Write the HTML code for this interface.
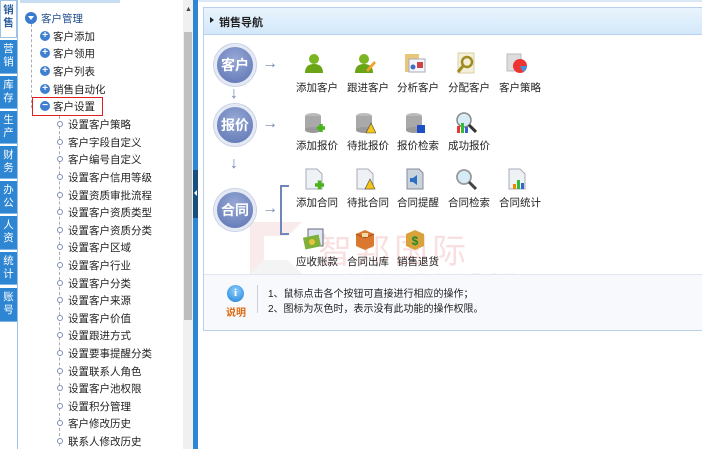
<!DOCTYPE html>
<html><head><meta charset="utf-8"><style>
*{margin:0;padding:0;box-sizing:border-box}
body{width:702px;height:449px;overflow:hidden;background:#fff;font-family:"Liberation Sans","Noto Sans CJK SC",sans-serif;font-size:11px;color:#222;position:relative}
.abs{position:absolute}
.tab{position:absolute;left:0;width:17px;background:#2e86d3;color:#fff;font-size:10.5px;line-height:13px;text-align:center;padding-top:3px;border-bottom:1px solid #7fb6e6}
.ti{position:absolute;white-space:nowrap;font-size:10.5px}
.sub{position:absolute;left:68px;white-space:nowrap;font-size:10.5px;color:#222}
.subdot{position:absolute;left:57px;width:6px;height:6px;border:1.5px solid #7d8eb5;border-radius:50%;background:#fff}
.plus{position:absolute;left:40px;width:10px;height:10px;border-radius:50%;background:#3f7fd0;color:#fff;font-size:10px;line-height:10px;text-align:center;font-weight:bold}
.circ{position:absolute;width:42px;height:42px;border-radius:50%;background:radial-gradient(circle at 50% 35%,#97a9d6,#5b72b2);border:3px solid #e4e9f4;box-shadow:0 0 0 1px #c8d0e6;color:#fff;font-size:14px;font-weight:bold;text-align:center;line-height:36px}
.lbl{position:absolute;font-size:10.5px;white-space:nowrap}
.ic{position:absolute;width:22px;height:22px}
.arr{position:absolute;color:#6f86b8;font-size:16px}
</style></head><body>
<div class="abs" style="left:0;top:0;width:18px;height:449px;background:#fff;border-right:1px solid #9cc2e6"></div>
<div class="tab" style="top:0;height:38px;background:#fff;color:#2a5f9e;border:1px solid #9cc2e6;font-weight:bold">销<br>售</div>
<div class="tab" style="top:40px;height:34px">营<br>销</div>
<div class="tab" style="top:76px;height:33px">库<br>存</div>
<div class="tab" style="top:111px;height:33px">生<br>产</div>
<div class="tab" style="top:146px;height:33px">财<br>务</div>
<div class="tab" style="top:181px;height:33px">办<br>公</div>
<div class="tab" style="top:216px;height:34px">人<br>资</div>
<div class="tab" style="top:252px;height:33px">统<br>计</div>
<div class="tab" style="top:288px;height:34px">账<br>号</div>
<div class="abs" style="left:20px;top:0;width:100px;height:3px;background:#c8ddf2"></div>
<div class="abs" style="left:183px;top:0;width:10px;height:449px;background:#f0f0f0"></div>
<div class="abs" style="left:184px;top:32px;width:8px;height:128px;background:#c0c0c0"></div>
<div class="abs" style="left:184px;top:160px;width:8px;height:160px;background:#bdbdbd"></div>
<div class="abs" style="left:185px;top:6px;font-size:7px;color:#444">▲</div>
<div class="abs" style="left:193px;top:0;width:5px;height:449px;background:#2e86d3"></div>
<div class="abs" style="left:193px;top:170px;width:5px;height:48px;background:#17507e"></div>
<div class="abs" style="left:194px;top:190px;width:0;height:0;border:3px solid transparent;border-right:3px solid #fff;border-left:0"></div>
<div class="abs" style="left:31px;top:24px;height:84px;border-left:1px dashed #aab"></div>
<div class="abs" style="left:59px;top:116px;height:330px;border-left:1px dashed #aab"></div>
<div class="abs" style="left:25px;top:12px;width:12px;height:12px;border-radius:50%;background:#3a7bd0"></div>
<div class="abs" style="left:28px;top:16px;width:0;height:0;border:3px solid transparent;border-top:4px solid #fff;border-bottom:0"></div>
<div class="ti" style="left:41px;top:11px;color:#1e4e8c">客户管理</div>
<div class="plus" style="top:31px">+</div><div class="ti" style="left:53px;top:29px">客户添加</div>
<div class="plus" style="top:48px">+</div><div class="ti" style="left:53px;top:46px">客户领用</div>
<div class="plus" style="top:66px">+</div><div class="ti" style="left:53px;top:64px">客户列表</div>
<div class="plus" style="top:84px">+</div><div class="ti" style="left:53px;top:82px">销售自动化</div>
<div class="plus" style="top:101px">−</div><div class="ti" style="left:53px;top:99px">客户设置</div>
<div class="abs" style="left:32px;top:97px;width:71px;height:19px;border:1.5px solid #e02020"></div>
<div class="subdot" style="top:121px"></div><div class="sub" style="top:117px">设置客户策略</div>
<div class="subdot" style="top:139px"></div><div class="sub" style="top:135px">客户字段自定义</div>
<div class="subdot" style="top:156px"></div><div class="sub" style="top:152px">客户编号自定义</div>
<div class="subdot" style="top:174px"></div><div class="sub" style="top:170px">设置客户信用等级</div>
<div class="subdot" style="top:192px"></div><div class="sub" style="top:188px">设置资质审批流程</div>
<div class="subdot" style="top:209px"></div><div class="sub" style="top:205px">设置客户资质类型</div>
<div class="subdot" style="top:227px"></div><div class="sub" style="top:223px">设置客户资质分类</div>
<div class="subdot" style="top:244px"></div><div class="sub" style="top:240px">设置客户区域</div>
<div class="subdot" style="top:262px"></div><div class="sub" style="top:258px">设置客户行业</div>
<div class="subdot" style="top:280px"></div><div class="sub" style="top:276px">设置客户分类</div>
<div class="subdot" style="top:297px"></div><div class="sub" style="top:293px">设置客户来源</div>
<div class="subdot" style="top:315px"></div><div class="sub" style="top:311px">设置客户价值</div>
<div class="subdot" style="top:332px"></div><div class="sub" style="top:328px">设置跟进方式</div>
<div class="subdot" style="top:350px"></div><div class="sub" style="top:346px">设置要事提醒分类</div>
<div class="subdot" style="top:368px"></div><div class="sub" style="top:364px">设置联系人角色</div>
<div class="subdot" style="top:385px"></div><div class="sub" style="top:381px">设置客户池权限</div>
<div class="subdot" style="top:403px"></div><div class="sub" style="top:399px">设置积分管理</div>
<div class="subdot" style="top:420px"></div><div class="sub" style="top:416px">客户修改历史</div>
<div class="subdot" style="top:438px"></div><div class="sub" style="top:434px">联系人修改历史</div>
<div class="abs" style="left:198px;top:0;width:504px;height:2px;background:#dbe8f5"></div>
<div class="abs" style="left:203px;top:7px;width:500px;height:324px;border:1px solid #b9d1ec;background:#fff"></div>
<div class="abs" style="left:204px;top:8px;width:498px;height:27px;background:linear-gradient(#e9f4fd,#d3e8fa);border-bottom:1px solid #b9d1ec"></div>
<div class="abs" style="left:210px;top:17px;width:0;height:0;border:3px solid transparent;border-left:4px solid #222;border-right:0"></div>
<div class="abs" style="left:219px;top:14px;font-size:11px;font-weight:bold">销售导航</div>
<div class="abs" style="left:250px;top:222px;width:52px;height:52px;border:14px solid rgba(225,150,150,.18);border-right-color:transparent;border-bottom-color:rgba(200,200,200,.18)"></div>
<div class="abs" style="left:318px;top:224px;font-size:34px;color:rgba(230,130,130,.25);letter-spacing:4px">智邦国际</div>
<div class="abs" style="left:345px;top:270px;font-size:10px;color:rgba(180,180,180,.35);letter-spacing:8px">企业管理软件领导品牌</div>
<div class="circ" style="left:214px;top:44px">客户</div>
<div class="circ" style="left:214px;top:104px">报价</div>
<div class="circ" style="left:214px;top:189px">合同</div>
<div class="arr" style="left:230px;top:85px">↓</div>
<div class="arr" style="left:230px;top:155px">↓</div>
<div class="arr" style="left:262px;top:55px">→</div>
<div class="arr" style="left:262px;top:115px">→</div>
<div class="arr" style="left:262px;top:200px">→</div>
<div class="abs" style="left:280px;top:185px;width:9px;height:50px;border:2px solid #6f86b8;border-right:0"></div>
<svg class="ic" style="left:303px;top:52px" viewBox="0 0 22 22"><circle cx="11" cy="7" r="5" fill="#7bb51f"/><path d="M2 21q0-9 9-9t9 9z" fill="#6aa516"/></svg>
<svg class="ic" style="left:354px;top:52px" viewBox="0 0 22 22"><circle cx="10" cy="7" r="5" fill="#7bb51f"/><path d="M1 21q0-9 9-9t9 9z" fill="#6aa516"/><path d="M12 18l8-9 2 2-8 9z" fill="#f2a12b"/></svg>
<svg class="ic" style="left:404px;top:52px" viewBox="0 0 22 22"><rect x="1" y="2" width="14" height="18" fill="#e8c77a"/><rect x="5" y="7" width="16" height="13" fill="#f4f6fb" stroke="#aab"/><circle cx="9" cy="15" r="2.5" fill="#3d6cc4"/><rect x="13" y="10" width="6" height="6" fill="#c44"/></svg>
<svg class="ic" style="left:455px;top:52px" viewBox="0 0 22 22"><rect x="3" y="1" width="16" height="20" fill="#f3efd9" stroke="#d8cfa7"/><circle cx="12" cy="10" r="5" fill="none" stroke="#a08b1f" stroke-width="2.5"/><path d="M8 14l-5 6" stroke="#a08b1f" stroke-width="3"/></svg>
<svg class="ic" style="left:506px;top:52px" viewBox="0 0 22 22"><rect x="1" y="2" width="14" height="17" fill="#ddd" stroke="#bbb"/><circle cx="14" cy="14" r="7" fill="#e33"/><path d="M14 14l7 0a7 7 0 0 1-4 6z" fill="#4a90d9"/></svg>
<div class="lbl" style="left:296px;top:80px">添加客户</div>
<div class="lbl" style="left:347px;top:80px">跟进客户</div>
<div class="lbl" style="left:397px;top:80px">分析客户</div>
<div class="lbl" style="left:448px;top:80px">分配客户</div>
<div class="lbl" style="left:499px;top:80px">客户策略</div>
<svg class="ic" style="left:303px;top:112px" viewBox="0 0 22 22"><ellipse cx="10" cy="4" rx="8" ry="3" fill="#bbb"/><rect x="2" y="4" width="16" height="14" fill="#a9a9a9"/><ellipse cx="10" cy="18" rx="8" ry="3" fill="#999"/><path d="M14 16h8M18 12v8" stroke="#4bb31b" stroke-width="3.5"/></svg>
<svg class="ic" style="left:354px;top:112px" viewBox="0 0 22 22"><ellipse cx="10" cy="4" rx="8" ry="3" fill="#bbb"/><rect x="2" y="4" width="16" height="14" fill="#a9a9a9"/><ellipse cx="10" cy="18" rx="8" ry="3" fill="#999"/><path d="M17 11l5 10h-10z" fill="#f5c518" stroke="#444" stroke-width=".6"/></svg>
<svg class="ic" style="left:404px;top:112px" viewBox="0 0 22 22"><ellipse cx="10" cy="4" rx="8" ry="3" fill="#bbb"/><rect x="2" y="4" width="16" height="14" fill="#a9a9a9"/><ellipse cx="10" cy="18" rx="8" ry="3" fill="#999"/><rect x="13" y="13" width="8" height="8" fill="#1f4fc4"/></svg>
<svg class="ic" style="left:455px;top:112px" viewBox="0 0 22 22"><circle cx="9" cy="8" r="7" fill="#d8ecf7" stroke="#888" stroke-width="1.5"/><path d="M14 13l7 7" stroke="#333" stroke-width="3"/><rect x="2" y="14" width="3" height="7" fill="#e33"/><rect x="6" y="11" width="3" height="10" fill="#3b3"/><rect x="10" y="15" width="3" height="6" fill="#36c"/></svg>
<div class="lbl" style="left:296px;top:138px">添加报价</div>
<div class="lbl" style="left:347px;top:138px">待批报价</div>
<div class="lbl" style="left:397px;top:138px">报价检索</div>
<div class="lbl" style="left:448px;top:138px">成功报价</div>
<svg class="ic" style="left:303px;top:168px" viewBox="0 0 22 22"><path d="M3 1h11l5 5v15H3z" fill="#eef2f5" stroke="#aab"/><path d="M12 17h9M16.5 12.5v9" stroke="#4bb31b" stroke-width="3.5"/></svg>
<svg class="ic" style="left:354px;top:168px" viewBox="0 0 22 22"><path d="M3 1h11l5 5v15H3z" fill="#eef2f5" stroke="#aab"/><path d="M16 11l5 10h-10z" fill="#f5c518" stroke="#444" stroke-width=".6"/></svg>
<svg class="ic" style="left:404px;top:168px" viewBox="0 0 22 22"><path d="M3 1h12l4 4v16H3z" fill="#c9d3dc" stroke="#889"/><path d="M6 10h3l4-3v10l-4-3H6z" fill="#2d6fc1"/></svg>
<svg class="ic" style="left:455px;top:168px" viewBox="0 0 22 22"><circle cx="9" cy="9" r="7" fill="#d5ebf8" stroke="#999" stroke-width="1.8"/><path d="M14 14l7 7" stroke="#444" stroke-width="3"/></svg>
<svg class="ic" style="left:506px;top:168px" viewBox="0 0 22 22"><path d="M3 1h11l5 5v15H3z" fill="#eef2f5" stroke="#aab"/><rect x="11" y="12" width="3" height="9" fill="#3b3"/><rect x="15" y="15" width="3" height="6" fill="#36c"/><rect x="7" y="16" width="3" height="5" fill="#e80"/></svg>
<div class="lbl" style="left:296px;top:195px">添加合同</div>
<div class="lbl" style="left:347px;top:195px">待批合同</div>
<div class="lbl" style="left:397px;top:195px">合同提醒</div>
<div class="lbl" style="left:448px;top:195px">合同检索</div>
<div class="lbl" style="left:499px;top:195px">合同统计</div>
<svg class="ic" style="left:303px;top:228px" viewBox="0 0 22 22"><rect x="5" y="1" width="15" height="17" fill="#dfe6f3" stroke="#667"/><rect x="1" y="8" width="16" height="12" fill="#7fb13a" transform="rotate(-12 9 14)"/><circle cx="9" cy="14" r="3" fill="#e8c33a"/></svg>
<svg class="ic" style="left:354px;top:228px" viewBox="0 0 22 22"><path d="M2 6l9-4 9 4v12l-9 4-9-4z" fill="#d9782e"/><path d="M2 6l9 4 9-4" fill="none" stroke="#a9521a"/><rect x="8" y="5" width="6" height="4" fill="#f3d9a5"/></svg>
<svg class="ic" style="left:404px;top:228px" viewBox="0 0 22 22"><path d="M2 6l9-4 9 4v12l-9 4-9-4z" fill="#d9a23b"/><text x="11" y="17" font-size="12" font-weight="bold" fill="#1a8a2a" text-anchor="middle" font-family="Liberation Sans">$</text></svg>
<div class="lbl" style="left:296px;top:254px">应收账款</div>
<div class="lbl" style="left:347px;top:254px">合同出库</div>
<div class="lbl" style="left:397px;top:254px">销售退货</div>
<div class="abs" style="left:204px;top:274px;width:498px;height:56px;background:#f7f9fd;border-top:1px solid #dfe7f2"></div>
<div class="abs" style="left:227px;top:285px;width:17px;height:17px;border-radius:50%;background:radial-gradient(circle at 50% 35%,#8fd0ff,#1b7fd6);color:#fff;font-size:11px;font-weight:bold;text-align:center;line-height:17px;font-family:'Liberation Serif',serif">i</div>
<div class="abs" style="left:226px;top:304px;font-size:10px;color:#e06a10;font-weight:bold">说明</div>
<div class="abs" style="left:257px;top:285px;height:28px;border-left:1px solid #ccd"></div>
<div class="abs" style="left:268px;top:285px;font-size:10px">1、鼠标点击各个按钮可直接进行相应的操作；</div>
<div class="abs" style="left:268px;top:300px;font-size:10px">2、图标为灰色时，表示没有此功能的操作权限。</div>
</body></html>
